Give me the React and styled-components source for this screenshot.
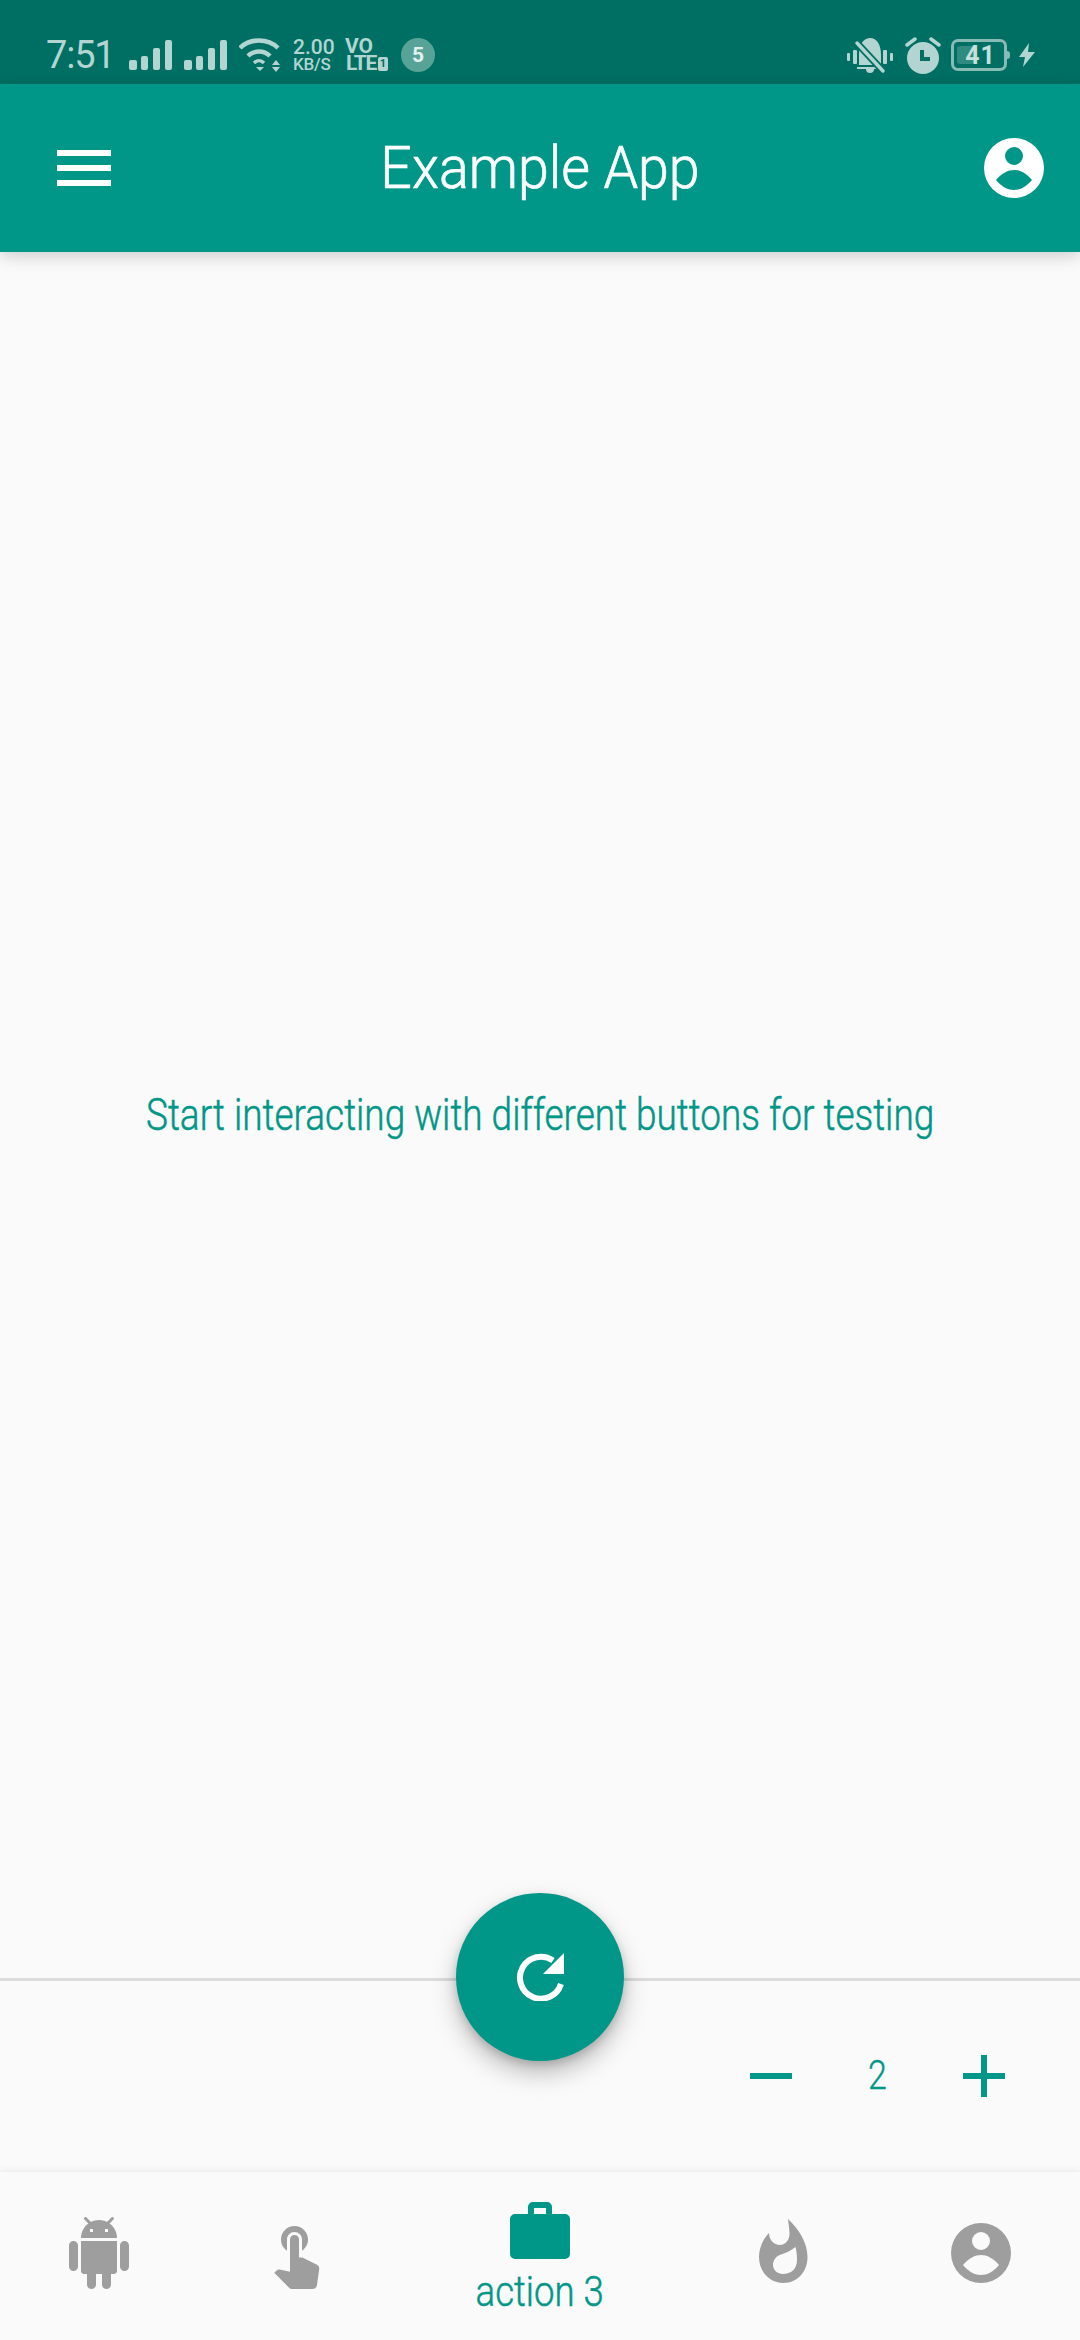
import React from "react";
import styled, { createGlobalStyle } from "styled-components";

const Global = createGlobalStyle`
  html, body { margin: 0; padding: 0; background: #fafafa; }
  * { box-sizing: border-box; }
`;
const Page = styled.div`
  position: relative; width: 1080px; height: 2340px; display: flex; flex-direction: column;
  background: #fafafa; font-family: Roboto, "Liberation Sans", sans-serif; overflow: hidden;
`;
const StatusBar = styled.div`
  height: 84px; flex: none; display: flex; align-items: center; justify-content: space-between;
  padding: 26px 45px 0 46px; background: #006f63; color: #b2d5d1;
`;
const StatusGroup = styled.div`display: flex; align-items: center; gap: ${p => p.$gap}px;`;
const Clock = styled.span`width: 65px; font-size: 38px; line-height: 40px; font-weight: 400; letter-spacing: -1.2px; margin-right: 6px; white-space: nowrap;`;
const Stack = styled.div`display: flex; flex-direction: column; align-items: flex-start; width: ${p => p.$width}px; font-weight: 500; white-space: nowrap;`;
const SpeedTop = styled.span`font-size: 21px; line-height: 17px;`;
const SpeedBottom = styled.span`font-size: 17px; line-height: 16px; letter-spacing: -.2px;`;
const LteTop = styled.span`font-size: 21px; line-height: 17px; font-weight: 700;`;
const LteBottom = styled.span`display: flex; align-items: center; gap: 2px; font-size: 21px; line-height: 17px; font-weight: 700; letter-spacing: -1.3px; margin-left: 1px;`;
const SimBox = styled.span`display: inline-flex; align-items: center; justify-content: center; width: 10px; height: 14px; border-radius: 2px; background: #b2d5d1; color: #006f63; font-size: 11px; letter-spacing: 0;`;
const Badge = styled.span`width: 34px; height: 34px; border-radius: 50%; background: #58a398; color: #e3f1ee; font-size: 21px; font-weight: 700; display: flex; align-items: center; justify-content: center; margin-left: 2px;`;
const Battery = styled.div`
  position: relative; width: 56px; height: 32px; border: 3px solid #86bcb4; border-radius: 7px; display: flex; align-items: center; justify-content: center;
  font-size: 25px; font-weight: 700; padding-left: 3px; letter-spacing: 1px; margin-right: 2px; color: #c6e0dc;
  &::before { content: ""; position: absolute; left: 3px; top: 4px; bottom: 4px; width: 17px; border-radius: 3px; background: #2f8a7f; }
  &::after { content: ""; position: absolute; right: -6px; top: 9px; width: 3px; height: 8px; border-radius: 0 3px 3px 0; background: #86bcb4; }
`;
const BatteryValue = styled.span`position: relative;`;
const BellSlot = styled.span`display: flex; margin-right: 2px;`;
const AppBar = styled.header`
  position: relative; z-index: 2; height: 168px; flex: none; display: flex; align-items: center; justify-content: space-between;
  padding: 0 36px 0 57px; background: #009688; box-shadow: 0 4px 16px rgba(0,0,0,.18);
`;
const Title = styled.h1`
  position: absolute; left: 0; right: 0; margin: 0; text-align: center; color: #fff; font-size: 60px; line-height: 70px; font-weight: 300; -webkit-text-stroke: .7px #fff; transform: scaleX(.925); pointer-events: none;
`;
const Hamburger = styled.div`
  width: 54px; display: flex; flex-direction: column; gap: 9px;
  & > span { display: block; height: 6px; background: #fff; }
`;
const Main = styled.main`flex: 1; display: flex; align-items: center; justify-content: center;`;
const Message = styled.p`margin: 0; color: #009688; font-size: 44px; line-height: 50px; font-weight: 300; -webkit-text-stroke: .5px #009688; white-space: nowrap; transform: scaleX(.84);`;
const Divider = styled.div`height: 3px; flex: none; background: #dcdcdc;`;
const Controls = styled.section`
  height: 191px; flex: none; display: flex; justify-content: flex-end; align-items: flex-start; padding: 74px 75px 0 0;
`;
const Step = styled.div`width: 42px; height: 42px; position: relative; color: #009688;
  &::before { content: ""; position: absolute; left: 0; right: 0; top: 18px; height: 6px; background: currentColor; }
  ${p => p.$plus && `&::after { content: ""; position: absolute; left: 18px; width: 6px; top: 0; bottom: 0; background: currentColor; }`}
`;
const Count = styled.span`width: 171px; text-align: center; color: #009688; font-size: 40px; line-height: 42px; font-weight: 300; -webkit-text-stroke: .4px #009688; transform: scaleX(.85);`;
const Fab = styled.button`
  position: absolute; left: 456px; top: 1893px; width: 168px; height: 168px; border: 0; border-radius: 50%; padding: 0;
  background: #009688; display: flex; align-items: center; justify-content: center;
  box-shadow: 0 12px 24px rgba(0,0,0,.25), 0 4px 8px rgba(0,0,0,.15);
`;
const Nav = styled.nav`
  height: 168px; flex: none; display: grid; grid-template-columns: 197px 198px 290px 197px 198px; background: #fafafa; box-shadow: 0 -2px 5px rgba(0,0,0,.06);
`;
const NavItem = styled.div`display: flex; flex-direction: column; align-items: center; padding-top: ${p => p.$top}px; color: ${p => p.$active ? "#009688" : "#9e9e9e"};`;
const NavLabel = styled.span`font-size: 42px; line-height: 48px; font-weight: 300; -webkit-text-stroke: .5px #009688; margin-top: 9px; transform: scaleX(.87); white-space: nowrap;`;

const Signal = () => (
  <svg width="43" height="30" viewBox="0 0 43 30" fill="#b2d5d1">
    <rect x="0" y="20" width="8" height="10" rx="2" /><rect x="12" y="16" width="7" height="14" rx="2" />
    <rect x="24" y="8" width="7" height="22" rx="2" /><rect x="36" y="0" width="7" height="30" rx="2" />
  </svg>
);
const Wifi = () => (
  <svg width="42" height="34" viewBox="0 0 42 34" fill="none" stroke="#b2d5d1" strokeWidth="4.500">
    <path d="M1 10C11 0 29 0 39 10" /><path d="M9 18C15 12 25 12 31 18" /><path d="M15 25C18 22 22 22 25 25" strokeWidth="3.500" />
    <path d="M17 29h8l-4 4z" fill="#b2d5d1" stroke="none" /><path d="M33 27h8l-4-5zM33 29h8l-4 5z" fill="#b2d5d1" stroke="none" />
  </svg>
);
const BellOff = () => (
  <svg width="46" height="37" viewBox="0 0 46 37" fill="#b2d5d1">
    <rect x="0" y="16" width="3" height="8" rx="1" /><rect x="6" y="13" width="4" height="14" rx="1" />
    <rect x="36" y="13" width="4" height="14" rx="1" /><rect x="43" y="16" width="3" height="8" rx="1" />
    <path d="M12 28V16C12 6 18 1 23 1C30 1 34 8 34 18V28Z" /><path d="M10 30h26v2H27a4 4 0 0 1-8 0H10z" />
    <path d="M10 6L36 34" stroke="#006f63" strokeWidth="7" /><path d="M10 6L36 34" stroke="#b2d5d1" strokeWidth="3.500" strokeLinecap="round" />
  </svg>
);
const Alarm = () => (
  <svg width="36" height="37" viewBox="0 0 36 37">
    <circle cx="18" cy="21" r="16" fill="#b2d5d1" />
    <path d="M2 8L10 2M34 8L26 2" stroke="#b2d5d1" strokeWidth="3.500" strokeLinecap="round" fill="none" />
    <path d="M17 13v9h8" stroke="#006f63" strokeWidth="4" fill="none" />
  </svg>
);
const Bolt = () => (
  <svg width="16" height="24" viewBox="0 0 16 24" fill="#b2d5d1"><path d="M10 0L0 14h6L4 24 16 9H9z" /></svg>
);
const ContactIcon = ({ color }) => (
  <svg width="60" height="60" viewBox="0 0 60 60" fill={color}>
    <path fillRule="evenodd" d="M30 0a30 30 0 1 0 0 60a30 30 0 1 0 0-60ZM30 9a9 9 0 1 1 0 18a9 9 0 1 1 0-18ZM12 42C18 35 24 32 30 32S42 35 48 42C42 49 36 52 30 52S18 49 12 42Z" />
  </svg>
);
const Android = () => (
  <svg width="72" height="72" viewBox="0 0 24 24" fill="currentColor">
    <path d="M6 18c0 .55.45 1 1 1h1v3.5c0 .83.67 1.5 1.5 1.5s1.5-.67 1.5-1.5V19h2v3.5c0 .83.67 1.5 1.5 1.5s1.5-.67 1.5-1.5V19h1c.55 0 1-.45 1-1V8H6v10zM3.5 8C2.67 8 2 8.67 2 9.5v7c0 .83.67 1.5 1.5 1.5S5 17.33 5 16.5v-7C5 8.67 4.33 8 3.5 8zm17 0c-.83 0-1.5.67-1.5 1.5v7c0 .83.67 1.5 1.5 1.5s1.5-.67 1.5-1.5v-7c0-.83-.67-1.5-1.5-1.5zm-4.97-5.84l1.3-1.3c.2-.2.2-.51 0-.71-.2-.2-.51-.2-.71 0l-1.48 1.48C13.85 1.23 12.95 1 12 1c-.96 0-1.86.23-2.66.63L7.85.15c-.2-.2-.51-.2-.71 0-.2.2-.2.51 0 .71l1.31 1.31C6.97 3.26 6 5.01 6 7h12c0-1.99-.97-3.75-2.47-4.84zM10 5H9V4h1v1zm5 0h-1V4h1v1z" />
  </svg>
);
const Touch = () => (
  <svg width="72" height="72" viewBox="0 0 24 24" fill="currentColor">
    <path d="M9 11.24V7.5C9 6.12 10.12 5 11.5 5S14 6.12 14 7.5v3.74c1.21-.81 2-2.18 2-3.74C16 5.01 13.99 3 11.5 3S7 5.01 7 7.5c0 1.56.79 2.93 2 3.74zm9.84 4.63l-4.54-2.26c-.17-.07-.35-.11-.54-.11H13v-6c0-.83-.67-1.5-1.5-1.5S10 6.67 10 7.5v10.74l-3.43-.72c-.08-.01-.15-.03-.24-.03-.31 0-.59.13-.79.33l-.79.8 4.94 4.94c.27.27.65.44 1.06.44h6.79c.75 0 1.33-.55 1.44-1.28l.75-5.27c.01-.07.02-.14.02-.2 0-.62-.38-1.16-.91-1.38z" />
  </svg>
);
const Briefcase = () => (
  <svg width="60" height="57" viewBox="0 0 60 57" fill="currentColor">
    <path fillRule="evenodd" d="M18 12V5a5 5 0 0 1 5-5h14a5 5 0 0 1 5 5v7h13a5 5 0 0 1 5 5v35a5 5 0 0 1-5 5H5a5 5 0 0 1-5-5V17a5 5 0 0 1 5-5ZM24 6v6h12V6Z" />
  </svg>
);
const Flame = () => (
  <svg width="49" height="64" viewBox="0 0 49 64" fill="currentColor">
    <path fillRule="evenodd" d="M29 0C40 10 48.500 24 48.500 38C48.500 53 38 64 24.500 64C11 64 0 53 0 38C0 29 4 20 10 14C10 21 15 26 21 26C27 26 31 20 30.500 14C30.300 9 29.500 4 29 0ZM36.500 28C31 32 27 34 22 35.500C17 37 14 41 14 46C14 51 18.500 55 24 55C32 55 38 50 38 41C38 36 37.500 32 36.500 28Z" />
  </svg>
);
const Refresh = () => (
  <svg width="48" height="48" viewBox="0 0 48 48" fill="#fff">
    <path d="M45 31A21 21 0 1 1 37 7.500" fill="none" stroke="#fff" strokeWidth="6" />
    <path d="M48 0V21H27Z" />
  </svg>
);

export default function App() {
  return (
    <Page>
      <Global />
      <StatusBar>
        <StatusGroup $gap={12}>
          <Clock>7:51</Clock>
          <Signal />
          <Signal />
          <Wifi />
          <Stack $width={40}><SpeedTop>2.00</SpeedTop><SpeedBottom>KB/S</SpeedBottom></Stack>
          <Stack $width={42}><LteTop>VO</LteTop><LteBottom>LTE<SimBox>1</SimBox></LteBottom></Stack>
          <Badge>5</Badge>
        </StatusGroup>
        <StatusGroup $gap={10}>
          <BellSlot><BellOff /></BellSlot>
          <Alarm />
          <Battery><BatteryValue>41</BatteryValue></Battery>
          <Bolt />
        </StatusGroup>
      </StatusBar>
      <AppBar>
        <Hamburger><span /><span /><span /></Hamburger>
        <Title>Example App</Title>
        <ContactIcon color="#fff" />
      </AppBar>
      <Main><Message>Start interacting with different buttons for testing</Message></Main>
      <Divider />
      <Controls>
        <Step />
        <Count>2</Count>
        <Step $plus />
      </Controls>
      <Nav>
        <NavItem $top={45}><Android /></NavItem>
        <NavItem $top={45}><Touch /></NavItem>
        <NavItem $active $top={30}><Briefcase /><NavLabel>action 3</NavLabel></NavItem>
        <NavItem $top={47}><Flame /></NavItem>
        <NavItem $top={51}><ContactIcon color="currentColor" /></NavItem>
      </Nav>
      <Fab aria-label="refresh"><Refresh /></Fab>
    </Page>
  );
}
